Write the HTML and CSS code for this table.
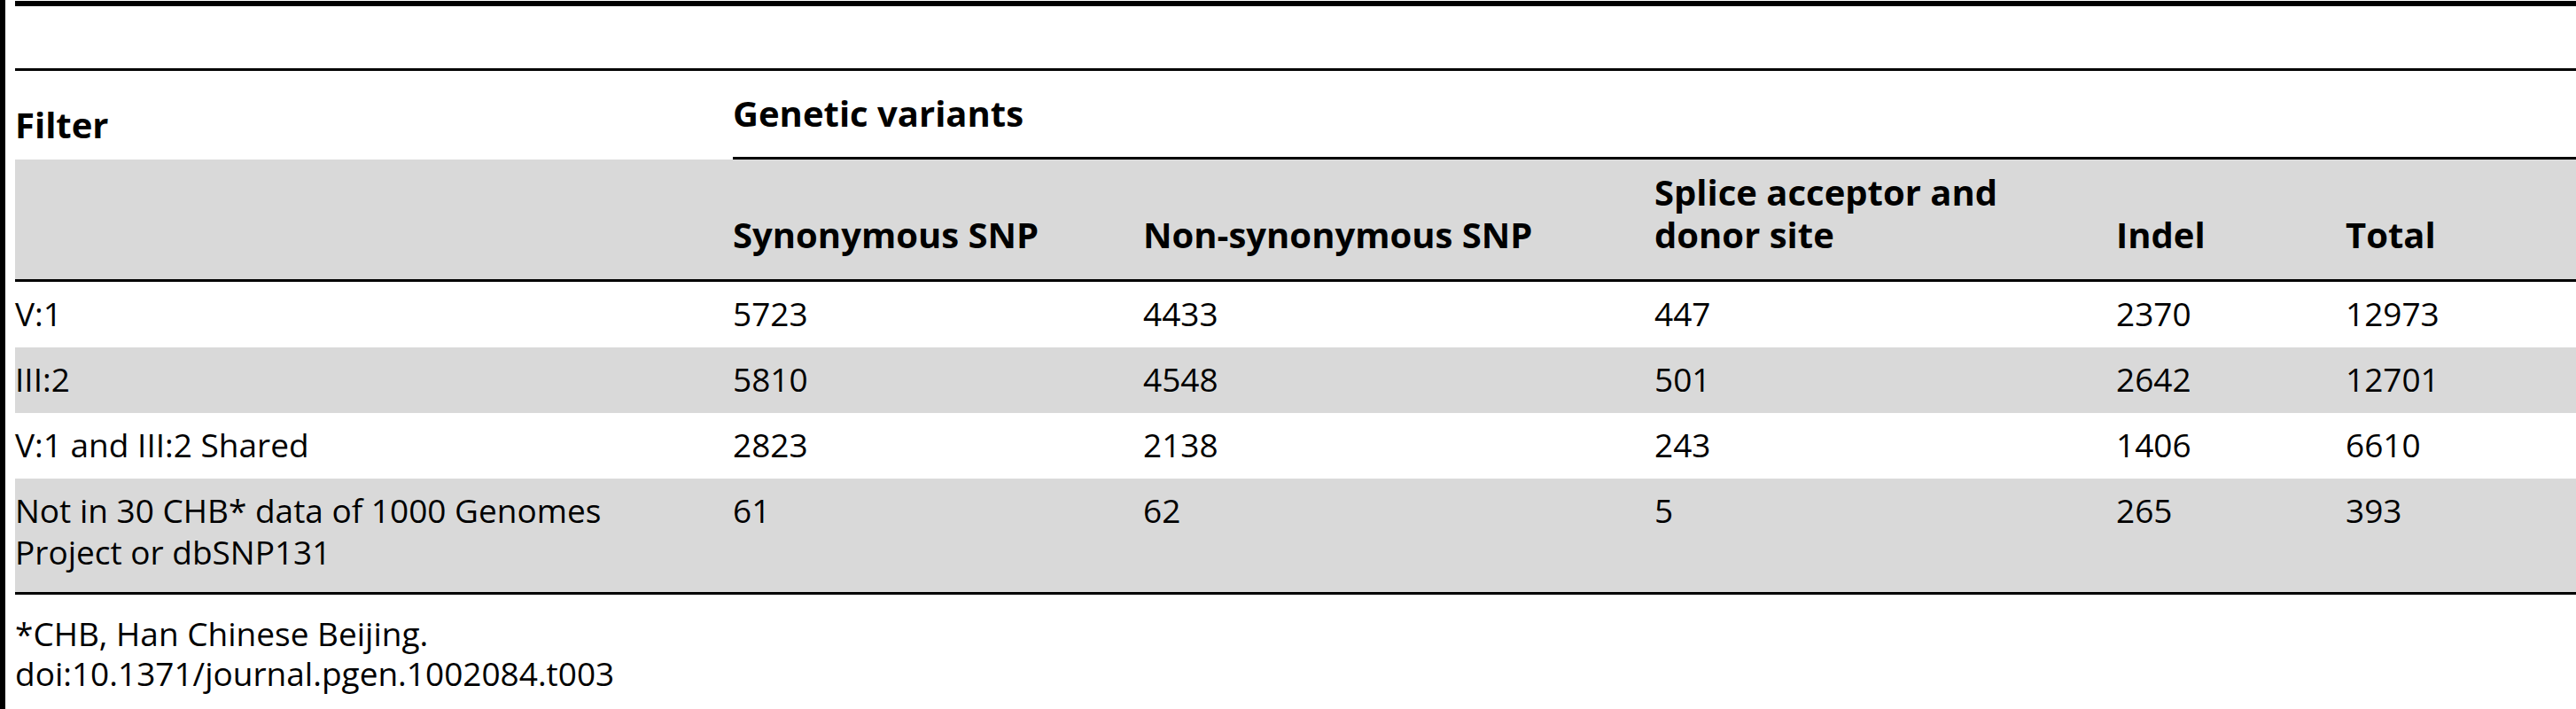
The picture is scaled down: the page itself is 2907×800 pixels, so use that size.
FILE: index.html
```html
<!DOCTYPE html>
<html lang="en">
<head>
<meta charset="utf-8">
<title>Genetic variants table</title>
<link rel="stylesheet" href="styles.css">
</head>
<body>
<div class="page">
  <div class="content">
    <div class="topline"></div>
    <table class="data">
      <colgroup>
        <col class="c-filter">
        <col class="c-syn">
        <col class="c-nonsyn">
        <col class="c-splice">
        <col class="c-indel">
        <col class="c-total">
      </colgroup>
      <thead>
        <tr class="head-1">
          <th class="filter">Filter</th>
          <th class="group" colspan="5">Genetic variants</th>
        </tr>
        <tr class="head-2">
          <th></th>
          <th>Synonymous SNP</th>
          <th>Non-synonymous SNP</th>
          <th>Splice acceptor and<br>donor site</th>
          <th>Indel</th>
          <th>Total</th>
        </tr>
      </thead>
      <tbody>
        <tr>
          <td>V:1</td><td>5723</td><td>4433</td><td>447</td><td>2370</td><td>12973</td>
        </tr>
        <tr class="shade">
          <td>III:2</td><td>5810</td><td>4548</td><td>501</td><td>2642</td><td>12701</td>
        </tr>
        <tr>
          <td>V:1 and III:2 Shared</td><td>2823</td><td>2138</td><td>243</td><td>1406</td><td>6610</td>
        </tr>
        <tr class="shade last">
          <td>Not in 30 CHB* data of 1000 Genomes<br>Project or dbSNP131</td><td>61</td><td>62</td><td>5</td><td>265</td><td>393</td>
        </tr>
      </tbody>
    </table>
    <div class="notes">
      <p>*CHB, Han Chinese Beijing.</p>
      <p>doi:10.1371/journal.pgen.1002084.t003</p>
    </div>
  </div>
</div>
</body>
</html>
```
FILE: styles.css
```css
html, body {
  margin: 0;
  padding: 0;
  background: #ffffff;
}

body {
  font-family: "Open Sans", "Liberation Sans", sans-serif;
  color: #000000;
  font-size: 37px;
  line-height: 47px;
}

.page {
  display: flex;
  min-height: 800px;
  border-left: 6px solid #000000;
  padding-left: 11px;
  box-sizing: border-box;
}

.content {
  flex: 1;
  min-width: 0;
}

.topline {
  margin-top: 1px;
  border-top: 6px solid #000000;
}

.data {
  margin-top: 70px;
  width: 100%;
  table-layout: fixed;
  border-collapse: separate;
  border-spacing: 0;
  border-top: 3px solid #000000;
  border-bottom: 3px solid #000000;
}

.c-filter { width: 810px; }
.c-syn { width: 463px; }
.c-nonsyn { width: 577px; }
.c-splice { width: 521px; }
.c-indel { width: 259px; }
.c-total { width: 260px; }

th, td {
  text-align: left;
  padding: 0 10px 0 0;
}

th {
  font-weight: 700;
  font-size: 40px;
  line-height: 48px;
}

.head-1 th {
  vertical-align: top;
}

.head-1 .filter {
  padding-top: 37px;
}

.head-1 .group {
  padding-top: 24px;
  padding-bottom: 25px;
  border-bottom: 3px solid #000000;
}

.head-2 th {
  background: #d9d9d9;
  vertical-align: bottom;
  padding-top: 13px;
  padding-bottom: 26px;
  border-bottom: 3px solid #000000;
}

tbody td {
  vertical-align: top;
  padding-top: 12px;
  padding-bottom: 15px;
}

tbody tr.shade td {
  background: #d9d9d9;
}

tbody tr.last td {
  padding-bottom: 22px;
}

.notes {
  margin-top: 21px;
}

.notes p {
  margin: 0;
  line-height: 45px;
}
```
